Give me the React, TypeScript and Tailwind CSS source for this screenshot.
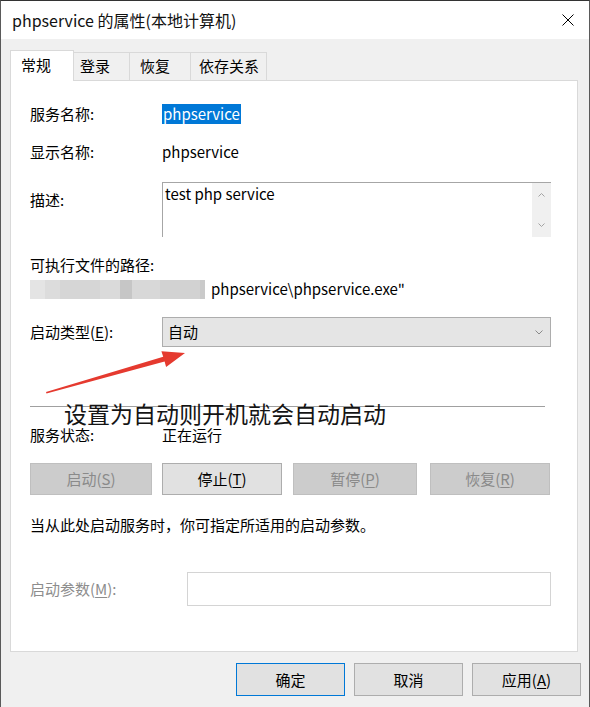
import React from 'react'

const tabs = [
  { name: '常规', w: 'w-[64px] pl-[10px]', active: true },
  { name: '登录', w: 'w-[56px] pl-[6px]', active: false },
  { name: '恢复', w: 'w-[61px] pl-[10px]', active: false },
  { name: '依存关系', w: 'w-[76px] pl-[8px]', active: false },
]

const blur = [
  { w: 'w-[15px]', c: 'bg-[#e4e4e4]' },
  { w: 'w-[15px]', c: 'bg-[#dcdcdc]' },
  { w: 'w-[40px]', c: 'bg-[#d6d6d6]' },
  { w: 'w-[20px]', c: 'bg-[#dadada]' },
  { w: 'w-[12px]', c: 'bg-[#c6c6c6]' },
  { w: 'w-[28px]', c: 'bg-[#d8d8d8]' },
  { w: 'w-[40px]', c: 'bg-[#d2d2d2]' },
  { w: 'w-[5px]', c: 'bg-[#cacaca]' },
]

function Key({ k }: { k: string }) {
  return (
    <>
      (<span className="underline underline-offset-2">{k}</span>)
    </>
  )
}

export default function App() {
  return (
    <div className="w-[590px] h-[707px] bg-[#f0f0f0] border-t border-t-[#333333] border-x border-x-[#5a5a5a] text-black text-[15px] font-['Noto_Sans_CJK_SC',sans-serif] overflow-hidden">
      {/* title bar */}
      <div className="h-[38px] bg-white flex items-center justify-between pl-[11px] pr-[15px]">
        <div className="text-[16px] leading-[20px] text-[#111]">phpservice 的属性(本地计算机)</div>
        <svg width="12" height="12" viewBox="0 0 12 12">
          <path d="M0.5 0.5 L11.5 11.5 M11.5 0.5 L0.5 11.5" stroke="#000" strokeWidth="1" />
        </svg>
      </div>

      {/* tabs */}
      <div className="mt-[11px] ml-[9px] h-[30px] flex items-end">
        {tabs.map((t) =>
          t.active ? (
            <div
              key={t.name}
              className={`${t.w} h-[31px] -mb-px pb-[3px] relative z-10 bg-white border-t border-x border-[#d9d9d9] flex items-center leading-[20px]`}
            >
              {t.name}
            </div>
          ) : (
            <div
              key={t.name}
              className={`${t.w} h-[28px] pb-[2px] bg-[#f0f0f0] border-t border-r border-[#d9d9d9] flex items-center leading-[20px]`}
            >
              {t.name}
            </div>
          )
        )}
      </div>

      {/* panel */}
      <div className="ml-[9px] w-[568px] h-[572px] bg-white border border-[#d9d9d9] pl-[19px] pr-[26px] pt-[23px] relative flex flex-col leading-[20px]">
        <div className="h-[20px] flex items-center">
          <div className="w-[132px] shrink-0">服务名称:</div>
          <span className="bg-[#0078d7] text-white px-[1px]">phpservice</span>
        </div>
        <div className="mt-[18px] h-[20px] flex items-center">
          <div className="w-[132px] shrink-0">显示名称:</div>
          <span>phpservice</span>
        </div>
        <div className="mt-[20px] flex">
          <div className="w-[132px] shrink-0 pt-[8px]">描述:</div>
          <div className="flex-1 h-[55px] border-t border-l border-[#a6a6a6] flex">
            <div className="flex-1 pl-[2px] pt-[1px]">test php service</div>
            <div className="w-[19px] bg-[#f0f0f0] flex flex-col items-center justify-between py-[10px]">
              <svg width="7" height="4" viewBox="0 0 7 4">
                <path d="M0.5 3.5 L3.5 0.5 L6.5 3.5" fill="none" stroke="#a3a3a3" />
              </svg>
              <svg width="7" height="4" viewBox="0 0 7 4">
                <path d="M0.5 0.5 L3.5 3.5 L6.5 0.5" fill="none" stroke="#a3a3a3" />
              </svg>
            </div>
          </div>
        </div>
        <div className="mt-[18px] h-[20px] flex items-center">可执行文件的路径:</div>
        <div className="mt-[4px] h-[20px] flex items-center">
          <div className="flex h-[19px]">
            {blur.map((b, i) => (
              <div key={i} className={`${b.w} ${b.c} h-full`} />
            ))}
          </div>
          <span className="ml-[6px]">phpservice\phpservice.exe"</span>
        </div>
        <div className="mt-[18px] h-[30px] flex items-center">
          <div className="w-[132px] shrink-0">
            启动类型<Key k="E" />:
          </div>
          <div className="flex-1 h-[30px] bg-[#e5e5e5] border border-[#adadad] flex items-center justify-between pl-[5px] pr-[7px]">
            <span>自动</span>
            <svg width="8" height="5" viewBox="0 0 8 5">
              <path d="M0.5 0.5 L4 4 L7.5 0.5" fill="none" stroke="#8a8a8a" />
            </svg>
          </div>
        </div>

        <div className="mt-[59px] h-px w-[515px] bg-[#a0a0a0]" />

        <div className="mt-[18px] h-[20px] flex items-center">
          <div className="w-[132px] shrink-0">服务状态:</div>
          <span>正在运行</span>
        </div>
        <div className="mt-[18px] h-[32px] flex">
          <div className="w-[122px] h-full bg-[#cccccc] border border-[#bfbfbf] text-[#8a8a8a] flex items-center justify-center">
            启动<Key k="S" />
          </div>
          <div className="ml-[10px] w-[120px] h-full bg-[#e1e1e1] border border-[#adadad] flex items-center justify-center">
            停止<Key k="T" />
          </div>
          <div className="ml-[11px] w-[124px] h-full bg-[#cccccc] border border-[#bfbfbf] text-[#8a8a8a] flex items-center justify-center">
            暂停<Key k="P" />
          </div>
          <div className="ml-[13px] w-[120px] h-full bg-[#cccccc] border border-[#bfbfbf] text-[#8a8a8a] flex items-center justify-center">
            恢复<Key k="R" />
          </div>
        </div>
        <div className="mt-[20px] h-[20px] flex items-center">当从此处启动服务时，你可指定所适用的启动参数。</div>
        <div className="mt-[37px] h-[34px] flex items-center">
          <div className="w-[157px] shrink-0 text-[#8d8d8d]">
            启动参数<Key k="M" />:
          </div>
          <div className="flex-1 h-[34px] bg-white border border-[#d4d4d4]" />
        </div>

        {/* annotation */}
        <svg className="absolute left-[30px] top-[265px] pointer-events-none" width="150" height="52" viewBox="0 0 150 52">
          <polygon
            points="5.5,47.5 123.6,15.5 125.1,21 144,7 120.4,5.2 122.2,10.7 5,46"
            fill="#e53a2f"
          />
        </svg>
        <div className="absolute left-[53px] top-[322px] text-[23px] leading-[21px] text-[#141414] whitespace-nowrap">
          设置为自动则开机就会自动启动
        </div>
      </div>

      {/* footer buttons */}
      <div className="mt-[11px] h-[33px] flex justify-end gap-[9px] pr-[8px] leading-[20px]">
        <div className="w-[109px] h-full bg-[#e1e1e1] border border-[#0078d7] flex items-center justify-center">确定</div>
        <div className="w-[109px] h-full bg-[#e1e1e1] border border-[#adadad] flex items-center justify-center">取消</div>
        <div className="w-[109px] h-full bg-[#e1e1e1] border border-[#adadad] flex items-center justify-center">
          应用<Key k="A" />
        </div>
      </div>
    </div>
  )
}
